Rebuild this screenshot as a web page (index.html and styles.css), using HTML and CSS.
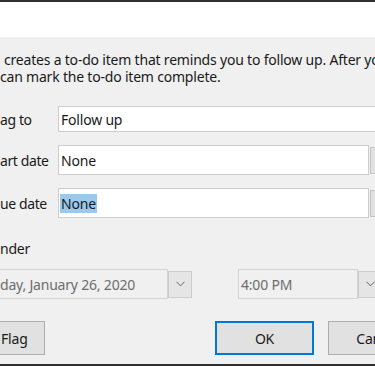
FILE: index.html
```html
<!DOCTYPE html>
<html lang="en">
<head>
    <meta charset="UTF-8">
    <meta name="viewport" content="width=device-width, initial-scale=1.0">
    <title>Custom</title>
    <link rel="stylesheet" href="styles.css">
</head>
<body>
    <div class="frame">
        <!-- Title bar -->
        <div class="titlebar"></div>

        <div class="content">
            <p class="intro">
                <span class="line first">creates a to-do item that reminds you to follow up. After you</span>
                <span class="line">can mark the to-do item complete.</span>
            </p>

            <!-- Flag fields -->
            <div class="fields">
                <div class="row">
                    <span class="label">ag to</span>
                    <div class="textbox wide">Follow up</div>
                </div>
                <div class="row tall">
                    <span class="label">art date</span>
                    <div class="textbox">None</div>
                    <div class="side-btn"></div>
                </div>
                <div class="row tall">
                    <span class="label">ue date</span>
                    <div class="textbox"><span class="selected">None</span></div>
                    <div class="side-btn"></div>
                </div>
            </div>

            <!-- Reminder -->
            <div class="section-label">nder</div>
            <div class="reminder">
                <div class="combo date">
                    <div class="combo-box">day, January 26, 2020</div>
                    <div class="combo-drop">
                        <svg width="9" height="6" viewBox="0 0 9 6"><path d="M0.5 0.8 L4.5 4.8 L8.5 0.8" fill="none" stroke="#606060" stroke-width="1"/></svg>
                    </div>
                </div>
                <div class="combo time">
                    <div class="combo-box">4:00 PM</div>
                    <div class="combo-drop">
                        <svg width="9" height="6" viewBox="0 0 9 6"><path d="M0.5 0.8 L4.5 4.8 L8.5 0.8" fill="none" stroke="#606060" stroke-width="1"/></svg>
                    </div>
                </div>
            </div>

            <!-- Buttons -->
            <div class="actions">
                <button class="btn clear">Flag</button>
                <button class="btn ok">OK</button>
                <button class="btn cancel">Cancel</button>
            </div>
        </div>
    </div>
</body>
</html>
```

FILE: styles.css
```css
body {
    margin: 0;
    padding: 0;
    width: 375px;
    height: 366px;
    overflow: hidden;
    background: #f0f0f0;
    font-family: 'Noto Sans', 'Open Sans', sans-serif;
    font-size: 14px;
    letter-spacing: -0.2px;
    color: #1a1a1a;
}

.frame {
    height: 366px;
    box-sizing: border-box;
    border-top: 2px solid #2f2f2f;
    border-bottom: 2px solid #2f2f2f;
    display: flex;
    flex-direction: column;
    overflow: hidden;
}

.titlebar {
    height: 35px;
    background: #fff;
    flex-shrink: 0;
}

.content {
    flex: 1;
    overflow: hidden;
}

.intro {
    margin: 14px 0 0 0;
    line-height: 17px;
    white-space: nowrap;
}

.intro .line {
    display: block;
}

.intro .first {
    padding-left: 4px;
}

.fields {
    margin-top: 21px;
    display: flex;
    flex-direction: column;
    gap: 13px;
}

.row {
    display: flex;
    align-items: center;
    height: 26px;
}

.row.tall {
    height: 30px;
}

.label {
    width: 58px;
    flex-shrink: 0;
    letter-spacing: -0.4px;
}

.textbox {
    box-sizing: border-box;
    height: 100%;
    width: 311px;
    flex-shrink: 0;
    background: #fff;
    border: 1px solid #cdcdcd;
    padding-left: 2px;
    display: flex;
    align-items: center;
}

.textbox.wide {
    width: 340px;
}

.selected {
    background: #99c9ef;
    padding: 0 1px;
    margin-left: -1px;
    line-height: 19px;
}

.side-btn {
    box-sizing: border-box;
    margin-left: 1px;
    width: 24px;
    height: 27px;
    flex-shrink: 0;
    background: #e1e1e1;
    border: 1px solid #c4c4c4;
}

.section-label {
    margin-top: 21px;
    line-height: 20px;
}

.reminder {
    margin-top: 10px;
    display: flex;
    gap: 46px;
}

.combo {
    display: flex;
    align-items: center;
    height: 30px;
    flex-shrink: 0;
}

.combo-box {
    box-sizing: border-box;
    height: 30px;
    border: 1px solid #d4d4d4;
    background: #f0f0f0;
    color: #6d6d6d;
    display: flex;
    align-items: center;
    padding-left: 2px;
}

.date .combo-box {
    width: 168px;
    border-left: none;
    padding-left: 0;
}

.time .combo-box {
    width: 120px;
}

.combo-drop {
    box-sizing: border-box;
    width: 24px;
    height: 27px;
    background: #e5e5e5;
    border: 1px solid #cccccc;
    display: flex;
    align-items: center;
    justify-content: center;
}

.actions {
    margin-top: 22px;
    display: flex;
}

.btn {
    box-sizing: border-box;
    height: 34px;
    width: 99px;
    background: #e1e1e1;
    border: 1px solid #adadad;
    font-family: inherit;
    font-size: 14px;
    letter-spacing: -0.2px;
    color: #1a1a1a;
    padding: 0;
    flex-shrink: 0;
}

.btn.clear {
    width: 45px;
    border-left: none;
    text-align: left;
    padding-left: 1px;
}

.btn.ok {
    margin-left: 170px;
    border: 2px solid #0078d7;
}

.btn.cancel {
    margin-left: 14px;
}
```
